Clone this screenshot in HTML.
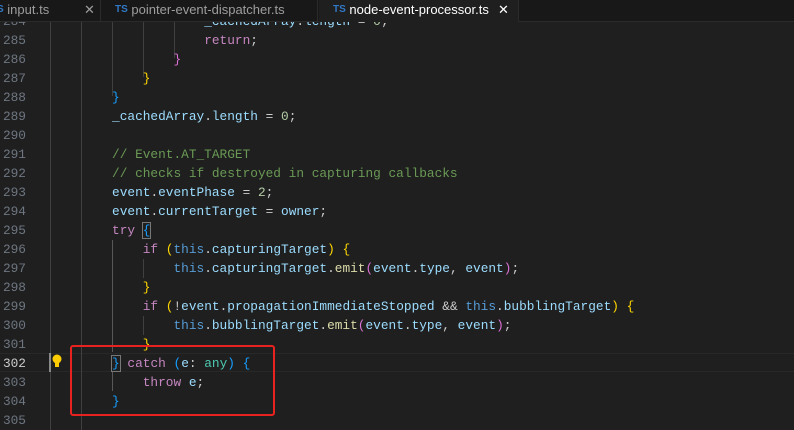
<!DOCTYPE html>
<html><head><meta charset="utf-8"><style>
body{margin:0;width:794px;height:430px;overflow:hidden;background:#1f1f1f;position:relative;font-family:"Liberation Mono",monospace}
.tabs{position:absolute;left:0;top:0;width:794px;height:21px;background:#181818;border-bottom:1px solid #2b2b2b;font-family:"Liberation Sans",sans-serif;font-size:13px;color:#9d9d9d}
.tab{position:absolute;top:0;height:21px;line-height:20px;border-right:1px solid #2b2b2b;white-space:nowrap}
.ts{color:#3178c6;font-weight:bold;font-size:10px;vertical-align:2px}
.act{background:#1f1f1f;color:#fff;height:22px}
.lns{position:absolute;left:0;top:12px;width:26px;text-align:right;color:#6e7681;font-size:12.8px;line-height:19px;margin:0;font-family:"Liberation Mono",monospace}
.code{position:absolute;left:50.6px;top:12px;font-size:12.8px;line-height:19px;white-space:pre;color:#cccccc;margin:0;font-family:"Liberation Mono",monospace}
.g{position:absolute;width:1px;background:#404040}
.k{color:#c586c0}.b{color:#569cd6}.v{color:#9cdcfe}.f{color:#dcdcaa}.c{color:#6a9955}.n{color:#b5cea8}.t{color:#4ec9b0}
.y{color:#ffd700}.p{color:#da70d6}.bl{color:#179fff}
</style></head><body>
<div style="position:absolute;left:0;top:353px;width:794px;height:17px;border-top:1px solid #282828;border-bottom:1px solid #282828"></div>
<div class="g" style="left:50px;top:22px;height:408px"></div>
<div class="g" style="left:81px;top:22px;height:408px"></div>
<div class="g" style="left:112px;top:22px;height:74px"></div>
<div class="g" style="left:112px;top:240px;height:112px;background:#585858"></div>
<div class="g" style="left:112px;top:372px;height:19px;background:#585858"></div>
<div class="g" style="left:143px;top:22px;height:55px"></div>
<div class="g" style="left:143px;top:259px;height:19px"></div>
<div class="g" style="left:143px;top:316px;height:19px"></div>
<div class="g" style="left:174px;top:22px;height:36px"></div>
<pre class="lns">284
285
286
287
288
289
290
291
292
293
294
295
296
297
298
299
300
301
<span style="color:#ccc">302</span>
303
304
305</pre>
<pre class="code">                    <span class="v">_cachedArray</span>.<span class="v">length</span> = <span class="n">0</span>;
                    <span class="k">return</span>;
                <span class="p">}</span>
            <span class="y">}</span>
        <span class="bl">}</span>
        <span class="v">_cachedArray</span>.<span class="v">length</span> = <span class="n">0</span>;

        <span class="c">// Event.AT_TARGET</span>
        <span class="c">// checks if destroyed in capturing callbacks</span>
        <span class="v">event</span>.<span class="v">eventPhase</span> = <span class="n">2</span>;
        <span class="v">event</span>.<span class="v">currentTarget</span> = <span class="v">owner</span>;
        <span class="k">try</span> <span class="bl" style="outline:1px solid #777">{</span>
            <span class="k">if</span> <span class="y">(</span><span class="b">this</span>.<span class="v">capturingTarget</span><span class="y">)</span> <span class="y">{</span>
                <span class="b">this</span>.<span class="v">capturingTarget</span>.<span class="f">emit</span><span class="p">(</span><span class="v">event</span>.<span class="v">type</span>, <span class="v">event</span><span class="p">)</span>;
            <span class="y">}</span>
            <span class="k">if</span> <span class="y">(</span>!<span class="v">event</span>.<span class="v">propagationImmediateStopped</span> &amp;&amp; <span class="b">this</span>.<span class="v">bubblingTarget</span><span class="y">)</span> <span class="y">{</span>
                <span class="b">this</span>.<span class="v">bubblingTarget</span>.<span class="f">emit</span><span class="p">(</span><span class="v">event</span>.<span class="v">type</span>, <span class="v">event</span><span class="p">)</span>;
            <span class="y">}</span>
        <span class="bl" style="outline:1px solid #777">}</span> <span class="k">catch</span> <span class="bl">(</span><span class="v">e</span>: <span class="t">any</span><span class="bl">)</span> <span class="bl">{</span>
            <span class="k">throw</span> <span class="v">e</span>;
        <span class="bl">}</span>
</pre>
<div class="tabs">
<div class="tab" style="left:0;width:100px"><span class="ts" style="margin-left:-3px">S</span> input.ts <span style="position:absolute;left:84px">✕</span></div>
<div class="tab" style="left:101px;width:217px;padding-left:14px;box-sizing:border-box"><span class="ts">TS</span> pointer-event-dispatcher.ts</div>
<div class="tab act" style="left:319px;width:200px;padding-left:14px;box-sizing:border-box"><span class="ts">TS</span> node-event-processor.ts <span style="position:absolute;left:179px">✕</span></div>
</div>
<div style="position:absolute;left:52px;top:354px;width:10px;height:13px"><svg width="10" height="14"><circle cx="5" cy="5" r="4.5" fill="#ffcc00"/><rect x="3" y="9" width="4" height="4" fill="#ffcc00"/></svg></div>
<div style="position:absolute;left:49px;top:353px;width:2px;height:19px;background:#888"></div>
<div style="position:absolute;left:70px;top:345px;width:201px;height:67px;border:2.5px solid #e8231f;border-radius:3px"></div>
</body></html>
